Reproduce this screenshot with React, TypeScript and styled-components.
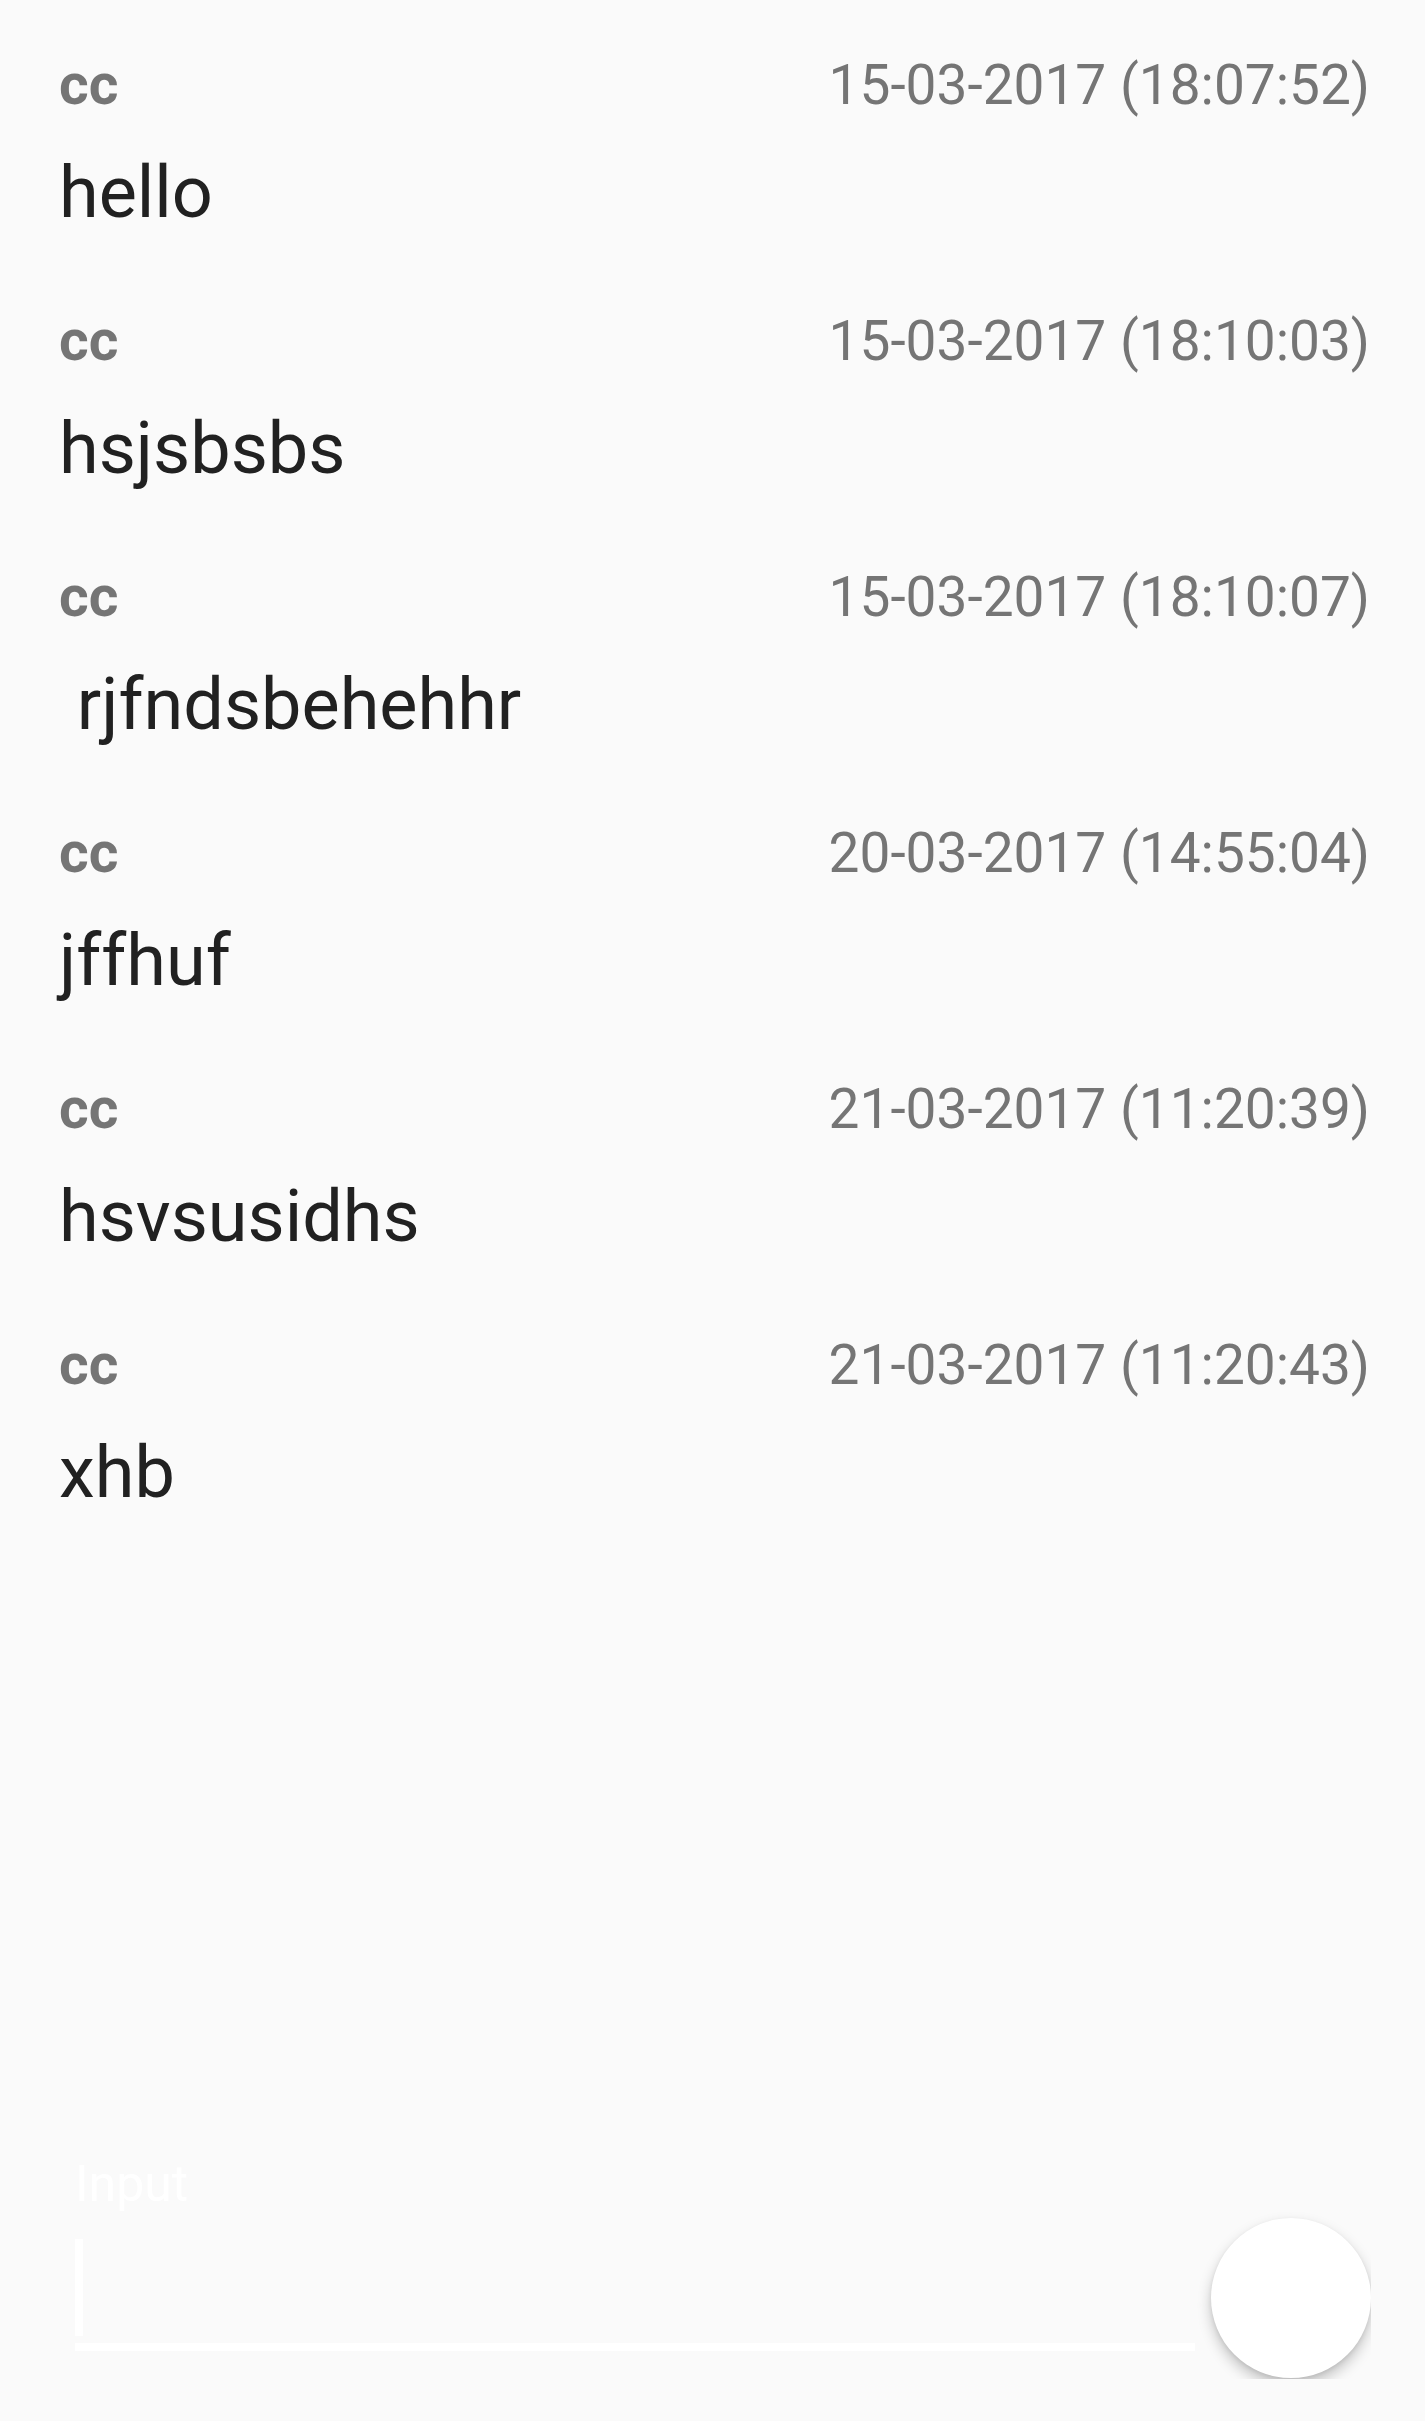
import React from 'react';
import styled, { createGlobalStyle } from 'styled-components';

const GlobalStyle = createGlobalStyle`
  html, body {
    margin: 0;
    padding: 0;
    background: #fafafa;
  }
  body {
    font-family: Roboto, "Noto Sans", "Liberation Sans", sans-serif;
  }
`;

const Screen = styled.div`
  height: 2421px;
  display: flex;
  flex-direction: column;
  background: #fafafa;
  overflow: hidden;
`;

const MessageList = styled.div`
  flex: 1;
  display: flex;
  flex-direction: column;
  padding: 15px 55px 0 59px;
`;

const MessageItem = styled.div`
  display: flex;
  flex-direction: column;
  gap: 30px;
  padding: 36px 0 34px;
`;

const MessageHeader = styled.div`
  display: flex;
  justify-content: space-between;
  align-items: baseline;
  height: 68px;
  line-height: 68px;
  color: #757575;
`;

const Author = styled.span`
  font-size: 57px;
  font-weight: 700;
`;

const Timestamp = styled.span`
  font-size: 55px;
  font-weight: 400;
`;

const MessageBody = styled.div`
  font-size: 72px;
  line-height: 88px;
  color: #212121;
  white-space: pre;
`;

const Composer = styled.div`
  display: flex;
  align-items: flex-end;
  padding: 0 54px 42px 75px;
`;

const InputField = styled.div`
  flex: 1;
  display: flex;
  flex-direction: column;
  margin-bottom: 28px;
`;

const InputLabel = styled.div`
  font-size: 50px;
  line-height: 60px;
  color: #ffffff;
`;

const InputArea = styled.div`
  display: flex;
  height: 97px;
  margin-top: 25px;
`;

const Caret = styled.div`
  width: 8px;
  height: 100%;
  background: #ffffff;
`;

const Underline = styled.div`
  height: 8px;
  margin-top: 7px;
  background: #ffffff;
`;

const FabClip = styled.div`
  padding: 20px 0 1px 16px;
  overflow: hidden;
`;

const Fab = styled.button`
  display: block;
  width: 160px;
  height: 160px;
  border: none;
  border-radius: 50%;
  background: #ffffff;
  box-shadow: 0 7px 14px rgba(0, 0, 0, 0.22), 0 2px 4px rgba(0, 0, 0, 0.08);
  padding: 0;
`;

const messages = [
  { author: 'cc', time: '15-03-2017 (18:07:52)', text: 'hello' },
  { author: 'cc', time: '15-03-2017 (18:10:03)', text: 'hsjsbsbs' },
  { author: 'cc', time: '15-03-2017 (18:10:07)', text: ' rjfndsbehehhr' },
  { author: 'cc', time: '20-03-2017 (14:55:04)', text: 'jffhuf' },
  { author: 'cc', time: '21-03-2017 (11:20:39)', text: 'hsvsusidhs' },
  { author: 'cc', time: '21-03-2017 (11:20:43)', text: 'xhb' },
];

export default function App() {
  return (
    <>
      <GlobalStyle />
      <Screen>
        <MessageList>
          {messages.map((m, i) => (
            <MessageItem key={i}>
              <MessageHeader>
                <Author>{m.author}</Author>
                <Timestamp>{m.time}</Timestamp>
              </MessageHeader>
              <MessageBody>{m.text}</MessageBody>
            </MessageItem>
          ))}
        </MessageList>
        <Composer>
          <InputField>
            <InputLabel>Input</InputLabel>
            <InputArea>
              <Caret />
            </InputArea>
            <Underline />
          </InputField>
          <FabClip>
            <Fab aria-label="send" />
          </FabClip>
        </Composer>
      </Screen>
    </>
  );
}
